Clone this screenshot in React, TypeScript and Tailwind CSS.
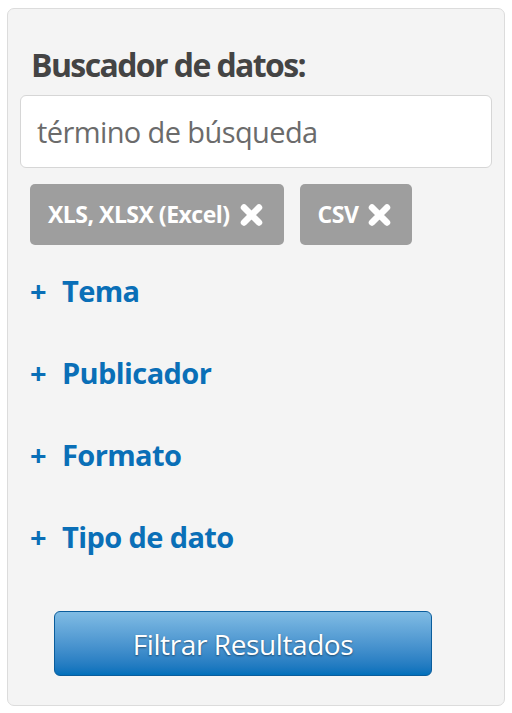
const XIcon = () => (
  <svg viewBox="0 0 24 24" className="w-[25px] h-[24px]" aria-hidden="true">
    <path
      d="M4.5 4.5 L19.5 19.5 M19.5 4.5 L4.5 19.5"
      stroke="white"
      strokeWidth="6.5"
      strokeLinecap="round"
      fill="none"
    />
  </svg>
);

const Tag = ({ label }: { label: string }) => (
  <span className="inline-flex items-center gap-[9px] h-[61px] pl-[18px] pr-[20px] rounded-[5px] bg-[#9e9e9e] text-white font-bold text-[23px] tracking-[-0.5px]">
    {label}
    <XIcon />
  </span>
);

const FACETS = ["Tema", "Publicador", "Formato", "Tipo de dato"];

export default function App() {
  return (
    <div className="w-[512px] h-[713px] bg-white pt-[8px] pl-[7px] font-['Open_Sans',sans-serif]">
      <div className="w-[498px] h-[698px] bg-[#f4f4f4] border border-[#dcdcdc] rounded-[7px] px-[12px] pt-[36px]">
        <h2 className="text-[32px] leading-[40px] font-bold text-[#444] tracking-[-1.6px] pl-[11px]">
          Buscador de datos:
        </h2>
        <input
          type="text"
          placeholder="término de búsqueda"
          className="mt-[10px] w-full h-[73px] bg-white border border-[#d6d6d6] rounded-[6px] px-[16px] text-[29px] tracking-[-0.6px] placeholder:text-[#6b6b6b] outline-none"
        />
        <div className="flex gap-[16px] mt-[16px] pl-[10px]">
          <Tag label="XLS, XLSX (Excel)" />
          <Tag label="CSV" />
        </div>
        <ul className="mt-[18px] pl-[10px] flex flex-col">
          {FACETS.map((facet) => (
            <li
              key={facet}
              className="h-[82px] flex items-start text-[#0a6fb7] font-bold text-[29px] leading-[56px] tracking-[-0.6px]"
            >
              <span className="w-[32px]">+</span>
              {facet}
            </li>
          ))}
        </ul>
        <div className="pl-[34px] mt-[20px]">
          <button className="w-[378px] h-[65px] rounded-[6px] border border-[#0a5d9c] bg-gradient-to-b from-[#80bce4] to-[#0070bb] text-white text-[28px] tracking-[-0.4px] [text-shadow:0_1px_2px_rgba(0,0,0,0.45)]">
            Filtrar Resultados
          </button>
        </div>
      </div>
    </div>
  );
}
